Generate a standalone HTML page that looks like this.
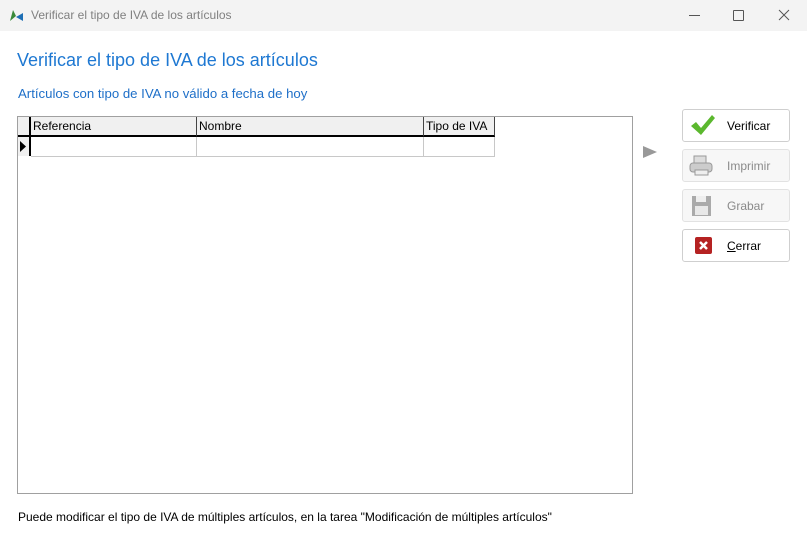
<!DOCTYPE html>
<html><head><style>
body{margin:0;width:807px;height:540px;background:#fff;font-family:"Liberation Sans",sans-serif;position:relative;overflow:hidden}
.a{position:absolute}
.tb{left:0;top:0;width:807px;height:31px;background:#f3f3f3}
.btn{position:absolute;left:682px;width:106px;height:31px;border:1px solid #cfcfcf;border-radius:3px;background:#fff;font-size:12px}
.btn.d{background:#f7f7f7;border-color:#e2e2e2;color:#8a8a8a}
.btn span{position:absolute;left:44px;top:9px}
.hc{position:absolute;top:117px;height:20px;background:#f0f0f0;border-left:1px solid #444;border-bottom:2px solid #000;font-size:12px;line-height:19px;padding-left:2px;box-sizing:border-box}
</style></head><body>
<div class="a tb"></div>
<svg class="a" style="left:9px;top:8px" width="16" height="14"><path d="M1 13 L4 2 L7 8 Z" fill="#3a8a3a"/><path d="M7 9 L14 5 L14 13 Z" fill="#1e6fb5"/></svg>
<div class="a" style="left:31px;top:8px;font-size:12px;color:#808080">Verificar el tipo de IVA de los artículos</div>
<div class="a" style="left:689px;top:15px;width:11px;height:1px;background:#555"></div>
<div class="a" style="left:733px;top:10px;width:9px;height:9px;border:1px solid #555;border-radius:1px"></div>
<svg class="a" style="left:778px;top:9px" width="12" height="12"><path d="M1 1L11 11M11 1L1 11" stroke="#555" stroke-width="1"/></svg>
<div class="a" style="left:17px;top:50px;font-size:18px;color:#1e78d2">Verificar el tipo de IVA de los artículos</div>
<div class="a" style="left:18px;top:86px;font-size:13.2px;color:#1e6fc8">Artículos con tipo de IVA no válido a fecha de hoy</div>
<div class="a" style="left:17px;top:116px;width:614px;height:376px;border:1px solid #a0a0a0"></div>
<div class="hc" style="left:18px;width:12px;padding:0;border-left:none"></div>
<div class="hc" style="left:29px;width:168px;border-left:2px solid #000">Referencia</div>
<div class="hc" style="left:196px;width:228px">Nombre</div>
<div class="hc" style="left:423px;width:72px;border-right:1px solid #444">Tipo de IVA</div>
<div class="a" style="left:18px;top:137px;width:11px;height:19px;background:#f0f0f0;border-right:2px solid #000"></div>
<svg class="a" style="left:20px;top:141px" width="7" height="11"><path d="M0 0L6 5.5L0 11Z" fill="#000"/></svg>
<div class="a" style="left:31px;top:137px;width:165px;height:19px;border-right:1px solid #c8c8c8;border-bottom:1px solid #c8c8c8"></div>
<div class="a" style="left:197px;top:137px;width:226px;height:19px;border-right:1px solid #c8c8c8;border-bottom:1px solid #c8c8c8"></div>
<div class="a" style="left:424px;top:137px;width:70px;height:19px;border-right:1px solid #c8c8c8;border-bottom:1px solid #c8c8c8"></div>
<svg class="a" style="left:643px;top:146px" width="14" height="12"><path d="M0 0L14 6L0 12Z" fill="#999"/></svg>
<div class="btn" style="top:109px"><svg class="a" style="left:7px;top:4px" width="26" height="22"><path d="M1 12L6 8L11 14L22 1L25 4L11 21Z" fill="#5bb82e"/></svg><span>Verificar</span></div>
<div class="btn d" style="top:149px"><svg class="a" style="left:5px;top:5px" width="26" height="22"><rect x="6" y="1" width="12" height="7" fill="#ddd" stroke="#999"/><rect x="2" y="8" width="22" height="9" rx="3" fill="#ccc" stroke="#999"/><rect x="7" y="15" width="13" height="5" fill="#eee" stroke="#999"/></svg><span>Imprimir</span></div>
<div class="btn d" style="top:189px"><svg class="a" style="left:8px;top:5px" width="22" height="22"><rect x="1" y="1" width="19" height="20" fill="#aaa"/><rect x="5" y="1" width="10" height="6" fill="#eee"/><rect x="4" y="11" width="13" height="9" fill="#e8e8e8"/></svg><span style="left:44px">Grabar</span></div>
<div class="btn" style="top:229px"><svg class="a" style="left:12px;top:7px" width="18" height="17"><rect x="0" y="0" width="17" height="17" rx="2" fill="#b52222"/><path d="M5 5L12 12M12 5L5 12" stroke="#fff" stroke-width="2.5"/></svg><span><u>C</u>errar</span></div>
<div class="a" style="left:18px;top:510px;font-size:12px;color:#000">Puede modificar el tipo de IVA de múltiples artículos, en la tarea "Modificación de múltiples artículos"</div>
</body></html>
